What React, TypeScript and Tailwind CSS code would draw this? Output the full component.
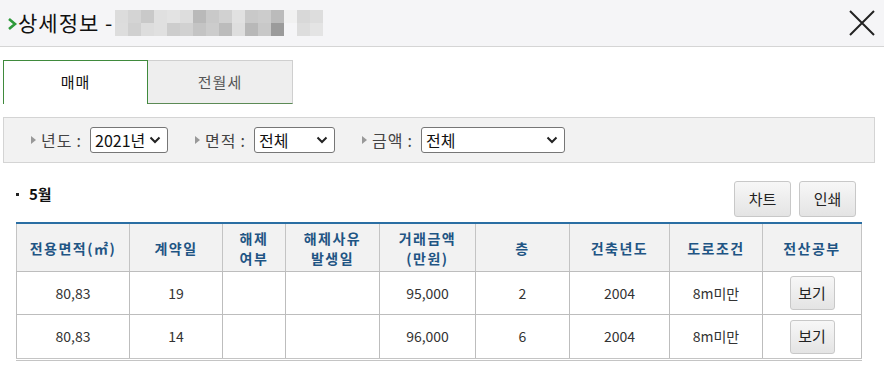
const font = { fontFamily: '"Noto Sans CJK KR", "Noto Sans", sans-serif' };

const mosaic = [
  ['bg-[#dcdcdc]', 'bg-[#d4d4d4]', 'bg-[#c9c9c9]', 'bg-[#e0e0e0]', 'bg-[#e3e3e3]', 'bg-[#dddddd]', 'bg-[#b9b9b9]', 'bg-[#c9c9c9]', 'bg-[#d1d1d1]', 'bg-[#e1e1e1]', 'bg-[#c9c9c9]', 'bg-[#cccccc]', 'bg-[#bbbbbb]', 'bg-[#f1f1f1]', 'bg-[#d8d8d8]', 'bg-[#dddddd]'],
  ['bg-[#dddddd]', 'bg-[#d0d0d0]', 'bg-[#dddddd]', 'bg-[#e0e0e0]', 'bg-[#cdcdcd]', 'bg-[#d1d1d1]', 'bg-[#c4c4c4]', 'bg-[#cccccc]', 'bg-[#bcbcbc]', 'bg-[#dedede]', 'bg-[#b8b8b8]', 'bg-[#c8c8c8]', 'bg-[#9b9b9b]', 'bg-[#f5f5f7]', 'bg-[#dddddd]', 'bg-[#e4e4e4]'],
];

const cols = ['w-[113px]', 'w-[93px]', 'w-[63px]', 'w-[94px]', 'w-[96px]', 'w-[94px]', 'w-[100px]', 'w-[93px]', 'w-[100px]'];

const headers = [
  ['전용면적(㎡)'],
  ['계약일'],
  ['해제', '여부'],
  ['해제사유', '발생일'],
  ['거래금액', '(만원)'],
  ['층'],
  ['건축년도'],
  ['도로조건'],
  ['전산공부'],
];

const rows = [
  ['80,83', '19', '', '', '95,000', '2', '2004', '8m미만'],
  ['80,83', '14', '', '', '96,000', '6', '2004', '8m미만'],
];

function Chevron() {
  return (
    <svg width="12" height="8" viewBox="0 0 12 8" className="shrink-0">
      <path d="M1.5 1.5 L6 6 L10.5 1.5" fill="none" stroke="#222" strokeWidth="2" />
    </svg>
  );
}

function Filter({ label, value, width }: { label: string; value: string; width: string }) {
  return (
    <div className="flex items-center">
      <span className="mr-[5px] h-0 w-0 border-y-[4px] border-l-[5px] border-y-transparent border-l-[#999]" />
      <span className="flex w-[44px] items-center text-[16px] text-[#444]">
        <span className="tracking-[1px]">{label}</span>
        <span className="ml-[4px]">:</span>
      </span>
      <div className={`ml-[5px] flex h-[26px] items-center justify-between rounded-[3px] border border-[#767676] bg-white pl-[4px] pr-[6px] text-[16px] text-[#111] ${width}`}>
        <span>{value}</span>
        <Chevron />
      </div>
    </div>
  );
}

function GrayButton({ children, className }: { children: string; className: string }) {
  return (
    <button className={`rounded-[3px] border border-[#c8c8c8] bg-gradient-to-b from-[#f7f7f7] to-[#e4e4e4] text-[15px] text-[#222] ${className}`}>
      {children}
    </button>
  );
}

export default function App() {
  return (
    <div className="h-[386px] w-[884px] overflow-hidden bg-white" style={font}>
      <div className="flex h-[47px] items-center justify-between border-b border-[#d5d5d5] bg-[#f5f5f7] pl-[7px] pr-[8px]">
        <div className="flex items-center">
          <svg width="11" height="14" viewBox="0 0 11 14" className="mt-[2px]">
            <path d="M2 2 L8 7 L2 12" fill="none" stroke="#2e9a3a" strokeWidth="2.6" />
          </svg>
          <span className="text-[21px] tracking-[1px] text-[#111]">상세정보 -</span>
          <div className="ml-[2px] flex flex-col">
            {mosaic.map((r, i) => (
              <div key={i} className="flex">
                {r.map((c, j) => (
                  <div key={j} className={`h-[13px] w-[13px] ${c}`} />
                ))}
              </div>
            ))}
          </div>
        </div>
        <svg width="28" height="28" viewBox="0 0 28 28">
          <path d="M2 2 L26 26 M26 2 L2 26" stroke="#222" strokeWidth="2" />
        </svg>
      </div>

      <div className="ml-[3px] mt-[13px] flex">
        <div className="flex h-[44px] w-[145px] items-center justify-center border-x border-t border-[#3f8a3c] bg-white text-[15px] tracking-[1px] text-[#111]">
          매매
        </div>
        <div className="flex h-[44px] w-[145px] items-center justify-center border-b border-r border-t border-b-[#5b8a55] border-r-[#cfcfcf] border-t-[#cfcfcf] bg-[#eeeeee] text-[15px] tracking-[1px] text-[#555]">
          전월세
        </div>
      </div>

      <div className="ml-[3px] mt-[13px] flex h-[46px] w-[872px] items-center gap-[27px] border border-[#d4d4d4] bg-[#f2f2f2] pl-[27px]">
        <Filter label="년도" value="2021년" width="w-[78px]" />
        <Filter label="면적" value="전체" width="w-[81px]" />
        <Filter label="금액" value="전체" width="w-[144px]" />
      </div>

      <div className="ml-[16px] mt-[18px] flex w-[846px] items-start justify-between">
        <div className="mt-[2px] flex items-center text-[15px] font-bold text-[#111]">
          <span className="mr-[10px] h-[3px] w-[3px] bg-[#222]" />
          5월
        </div>
        <div className="mr-[6px] flex gap-[8px]">
          <GrayButton className="h-[36px] w-[57px]">차트</GrayButton>
          <GrayButton className="h-[36px] w-[57px]">인쇄</GrayButton>
        </div>
      </div>

      <div className="ml-[16px] mt-[5px] w-[846px] border-b-[3px] border-t-2 border-b-[#c4c4c4] border-t-[#2a6ea3]" style={{ borderBottomStyle: 'double' }}>
        <div className="flex h-[48px] border-b border-[#bdbdbd] bg-[#f2f2f2]">
          {headers.map((h, i) => (
            <div
              key={i}
              className={`flex flex-col items-center justify-center border-l border-[#c4c4c4] text-[14px] font-bold leading-[20px] tracking-[1.5px] text-[#1f5584] last:border-r ${cols[i]}`}
            >
              {h.map((l) => (
                <span key={l}>{l}</span>
              ))}
            </div>
          ))}
        </div>
        {rows.map((r, ri) => (
          <div key={ri} className={`flex h-[43px] ${ri === 0 ? 'border-b border-[#bdbdbd]' : ''}`}>
            {r.map((c, i) => (
              <div key={i} className={`flex items-center justify-center border-l border-[#bdbdbd] text-[14px] text-[#333] ${cols[i]}`}>
                {c}
              </div>
            ))}
            <div className={`flex items-center justify-center border-x border-[#bdbdbd] ${cols[8]}`}>
              <GrayButton className="h-[34px] w-[45px] text-[14px]">보기</GrayButton>
            </div>
          </div>
        ))}
      </div>
    </div>
  );
}
